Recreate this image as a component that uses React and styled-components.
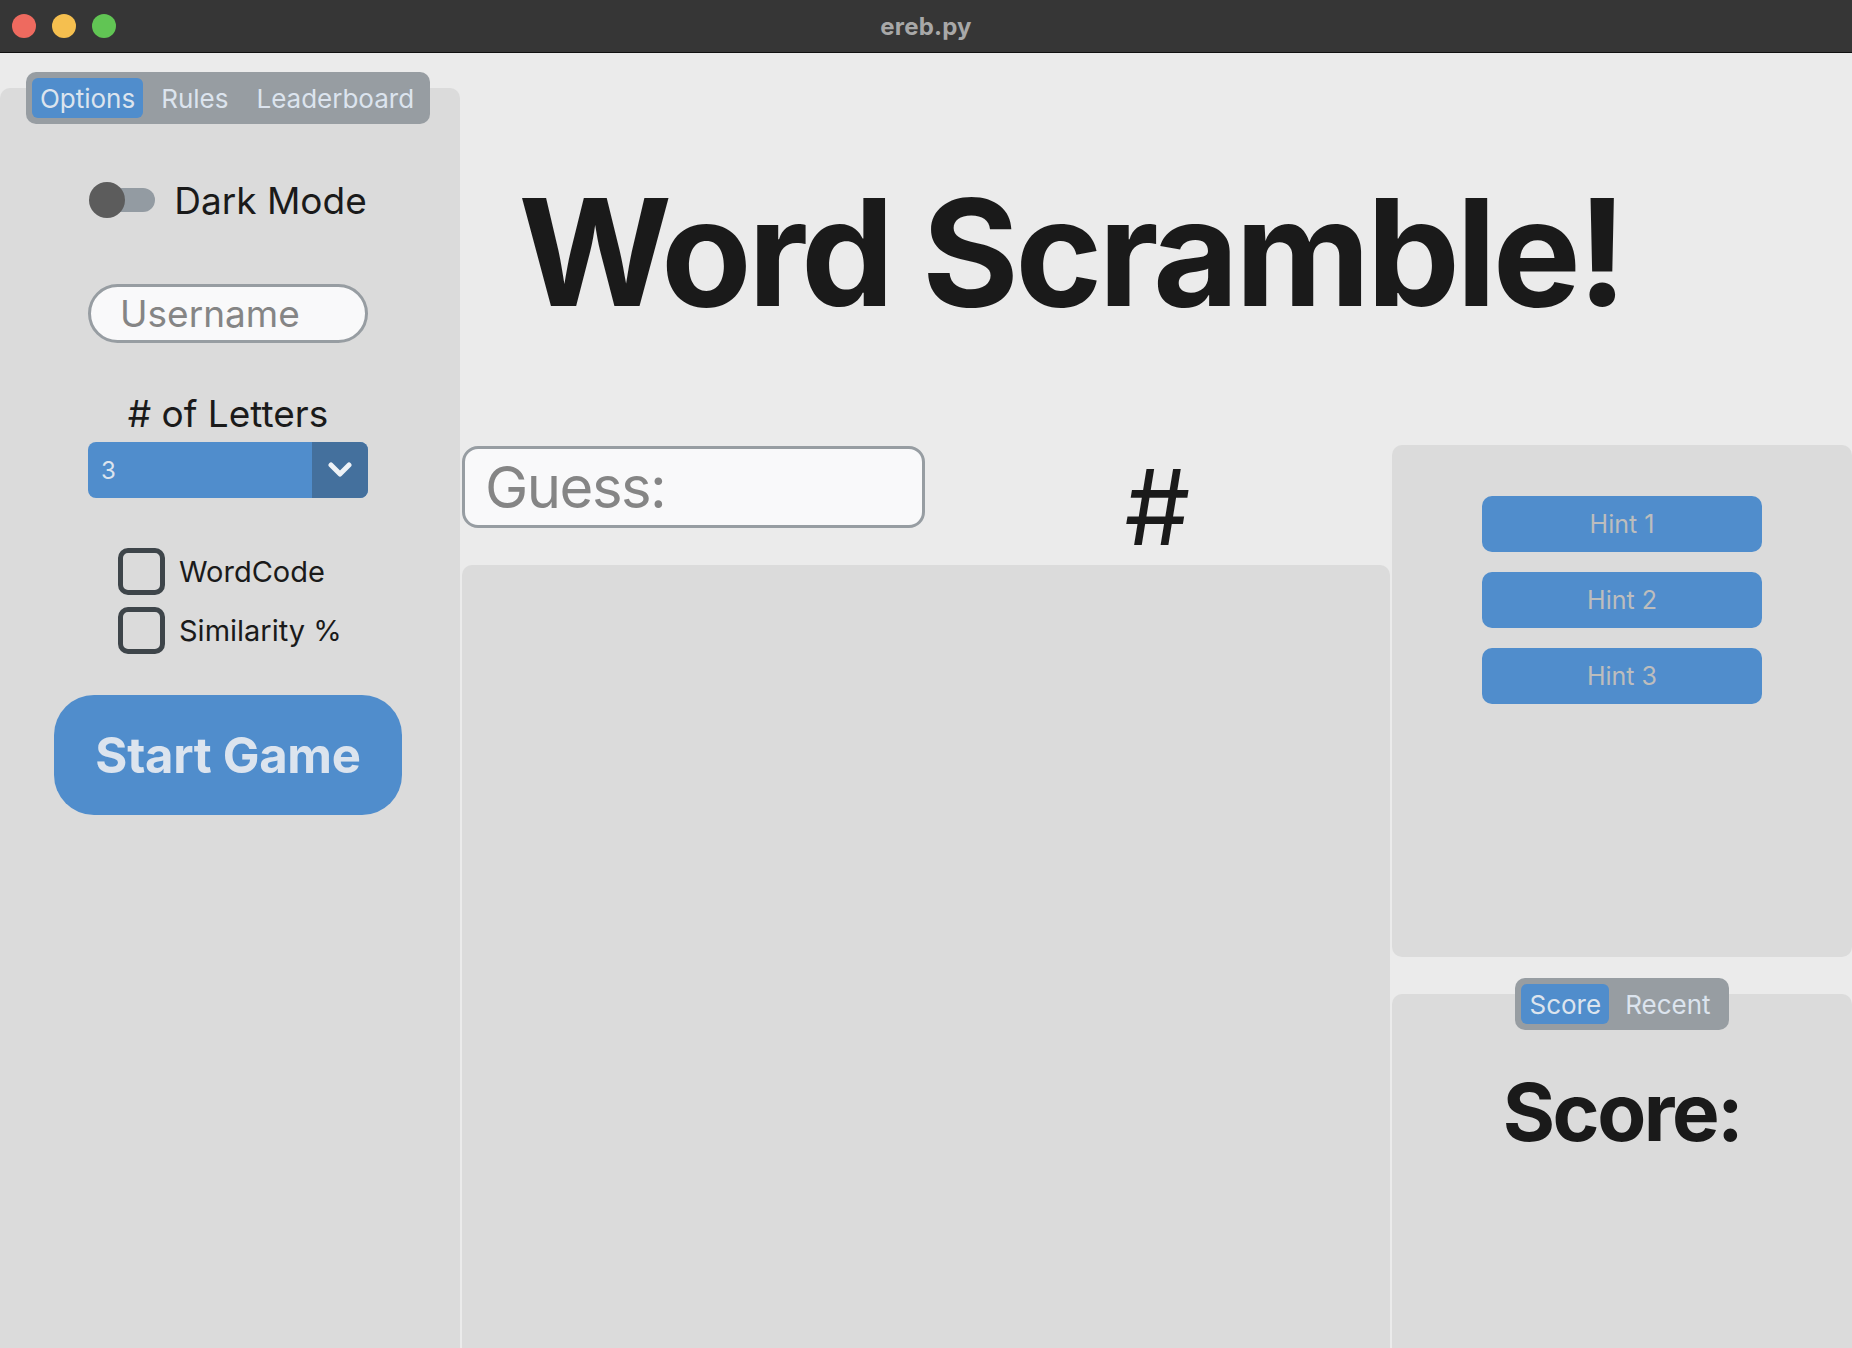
import React from 'react'
import styled, { createGlobalStyle } from 'styled-components'

const GlobalStyle = createGlobalStyle`
    html,
    body {
        margin: 0;
        padding: 0;
        height: 100%;
        overflow: hidden;
    }
    body {
        font-family: Inter, 'Noto Sans', sans-serif;
        background: #ebebeb;
        color: #1a1a1a;
    }
    #root {
        height: 100%;
    }
`

const Window = styled.div`
    display: flex;
    flex-direction: column;
    height: 100vh;
    background: #ebebeb;
`

const TitleBar = styled.header`
    flex: none;
    height: 52px;
    display: grid;
    grid-template-columns: 1fr auto 1fr;
    align-items: center;
    background: #363636;
    border-bottom: 1px solid #101010;
`

const Lights = styled.div`
    display: flex;
    gap: 16px;
    padding-left: 12px;
`

const Light = styled.span`
    width: 24px;
    height: 24px;
    border-radius: 50%;
    background: ${p => p.color};
`

const WindowTitle = styled.div`
    font-size: 24px;
    font-weight: 700;
    color: #a8a8a8;
    letter-spacing: 0.2px;
`

const Body = styled.div`
    flex: 1;
    min-height: 0;
    display: flex;
`

const SideColumn = styled.aside`
    width: 460px;
    flex: none;
    display: flex;
    flex-direction: column;
    align-items: center;
    padding-top: 19px;
`

const Segmented = styled.div`
    display: flex;
    padding: 6px;
    gap: 4px;
    background: #979da2;
    border-radius: 10px;
    position: relative;
    z-index: 1;
    margin-bottom: -36px;
    margin-right: ${p => p.shift || 0}px;
`

const Segment = styled.div`
    height: 40px;
    display: flex;
    align-items: center;
    padding: 0 ${p => p.pad || 8}px;
    border-radius: 6px;
    font-size: 26px;
    color: #dce4ee;
    background: ${p => (p.active ? '#508dcc' : 'transparent')};
`

const SidePanel = styled.div`
    align-self: stretch;
    flex: 1;
    background: #dbdbdb;
    border-radius: 10px 10px 0 0;
    padding-top: 94px;
    display: flex;
    flex-direction: column;
    align-items: center;
    padding-right: 4px;
`

const SwitchRow = styled.label`
    height: 36px;
    display: flex;
    align-items: center;
    gap: 19px;
    font-size: 37px;
    color: #1a1a1a;
`

const Switch = styled.span`
    position: relative;
    width: 66px;
    height: 36px;
    display: flex;
    align-items: center;

    &::before {
        content: '';
        margin-left: 15px;
        width: 51px;
        height: 24px;
        border-radius: 12px;
        background: #939ba2;
    }
    &::after {
        content: '';
        position: absolute;
        left: 0;
        top: 0;
        width: 36px;
        height: 36px;
        border-radius: 50%;
        background: #5c5c5c;
    }
`

const Entry = styled.div`
    box-sizing: border-box;
    width: ${p => p.w}px;
    height: ${p => p.h}px;
    margin-top: ${p => p.mt || 0}px;
    border: 3px solid #979da2;
    border-radius: ${p => p.r}px;
    background: #f9f9fa;
    display: flex;
    align-items: center;
    padding-left: ${p => p.pl}px;
    font-size: ${p => p.fs}px;
    letter-spacing: ${p => p.ls || 0}px;
    color: #858585;
    flex: none;
`

const FieldLabel = styled.div`
    margin-top: 47px;
    font-size: 37px;
    line-height: 48px;
`

const Dropdown = styled.div`
    margin-top: 4px;
    width: 280px;
    height: 56px;
    display: flex;
    border-radius: 8px;
    overflow: hidden;
    background: #508dcc;
    color: #dce4ee;
`

const DropValue = styled.div`
    flex: 1;
    display: flex;
    align-items: center;
    padding-left: 13px;
    font-size: 24px;
`

const DropArrow = styled.div`
    width: 56px;
    display: flex;
    align-items: center;
    justify-content: center;
    background: #44709d;
`

const Checks = styled.div`
    align-self: flex-start;
    margin: 50px 0 0 118px;
    display: flex;
    flex-direction: column;
    gap: 12px;
`

const CheckRow = styled.label`
    display: flex;
    align-items: center;
    gap: 14px;
    font-size: 29px;
    color: #1a1a1a;
`

const Box = styled.span`
    box-sizing: border-box;
    width: 47px;
    height: 47px;
    border: 5px solid #3e454a;
    border-radius: 10px;
`

const StartButton = styled.button`
    margin-top: 41px;
    width: 348px;
    height: 120px;
    border: none;
    border-radius: 40px;
    background: #508dcc;
    color: #dce4ee;
    font-family: inherit;
    font-size: 49px;
    font-weight: 700;
    letter-spacing: -0.3px;
`

const Main = styled.main`
    flex: 1;
    min-width: 0;
    margin-left: 2px;
    display: flex;
    flex-direction: column;
`

const TitleArea = styled.div`
    height: 392px;
    flex: none;
    display: flex;
    align-items: center;
    justify-content: center;
    padding-right: 172px;
`

const BigTitle = styled.h1`
    margin: 8px 0 0;
    font-size: 148px;
    font-weight: 700;
    letter-spacing: -3.7px;
    line-height: 1;
    color: #1a1a1a;
`

const Lower = styled.div`
    flex: 1;
    min-height: 0;
    display: flex;
    gap: 2px;
`

const CenterColumn = styled.section`
    width: 928px;
    flex: none;
    display: flex;
    flex-direction: column;
`

const GuessRow = styled.div`
    height: 120px;
    flex: none;
    display: flex;
    align-items: flex-start;
`

const HashMark = styled.div`
    flex: 1;
    text-align: center;
    font-size: 104px;
    line-height: 1;
    margin-top: 10px;
    color: #1a1a1a;
`

const Panel = styled.div`
    background: #dbdbdb;
    border-radius: ${p => p.radius || '10px'};
`

const GamePanel = styled(Panel)`
    flex: 1;
`

const RightColumn = styled.section`
    flex: 1;
    display: flex;
    flex-direction: column;
`

const HintPanel = styled(Panel)`
    height: 512px;
    flex: none;
    box-sizing: border-box;
    padding-top: 51px;
    display: flex;
    flex-direction: column;
    align-items: center;
    gap: 20px;
`

const HintButton = styled.button`
    width: 280px;
    height: 56px;
    border: none;
    border-radius: 10px;
    background: #508dcc;
    color: #bdbdbd;
    font-family: inherit;
    font-size: 25px;
`

const ScoreSection = styled.div`
    flex: 1;
    margin-top: 21px;
    display: flex;
    flex-direction: column;
    align-items: center;
`

const ScorePanel = styled(Panel)`
    align-self: stretch;
    flex: 1;
    padding-top: 69px;
    text-align: center;
`

const ScoreText = styled.div`
    font-size: 80px;
    font-weight: 700;
    letter-spacing: -2.5px;
    color: #1a1a1a;
`

const Chevron = () => (
    <svg width="24" height="16" viewBox="0 0 24 16">
        <polyline
            points="3,3 12,12 21,3"
            fill="none"
            stroke="#eef2f7"
            strokeWidth="5"
            strokeLinecap="round"
            strokeLinejoin="round"
        />
    </svg>
)

const App = () => (
    <>
        <GlobalStyle />
        <Window>
            <TitleBar>
                <Lights>
                    <Light color="#ee6a5f" />
                    <Light color="#f5bf4f" />
                    <Light color="#61c554" />
                </Lights>
                <WindowTitle>ereb.py</WindowTitle>
                <div />
            </TitleBar>
            <Body>
                <SideColumn>
                    <Segmented shift={4}>
                        <Segment active>Options</Segment>
                        <Segment pad={14}>Rules</Segment>
                        <Segment pad={10}>Leaderboard</Segment>
                    </Segmented>
                    <SidePanel>
                        <SwitchRow>
                            <Switch />
                            Dark Mode
                        </SwitchRow>
                        <Entry w={280} h={59} r={30} pl={29} fs={37} mt={66}>
                            Username
                        </Entry>
                        <FieldLabel># of Letters</FieldLabel>
                        <Dropdown>
                            <DropValue>3</DropValue>
                            <DropArrow>
                                <Chevron />
                            </DropArrow>
                        </Dropdown>
                        <Checks>
                            <CheckRow>
                                <Box />
                                WordCode
                            </CheckRow>
                            <CheckRow>
                                <Box />
                                Similarity %
                            </CheckRow>
                        </Checks>
                        <StartButton>Start Game</StartButton>
                    </SidePanel>
                </SideColumn>
                <Main>
                    <TitleArea>
                        <BigTitle>Word Scramble!</BigTitle>
                    </TitleArea>
                    <Lower>
                        <CenterColumn>
                            <GuessRow>
                                <Entry w={463} h={82} r={16} pl={20} fs={58} ls={-1.5} mt={1}>
                                    Guess:
                                </Entry>
                                <HashMark>#</HashMark>
                            </GuessRow>
                            <GamePanel radius="10px 10px 0 0" />
                        </CenterColumn>
                        <RightColumn>
                            <HintPanel>
                                <HintButton>Hint 1</HintButton>
                                <HintButton>Hint 2</HintButton>
                                <HintButton>Hint 3</HintButton>
                            </HintPanel>
                            <ScoreSection>
                                <Segmented>
                                    <Segment active>Score</Segment>
                                    <Segment pad={12}>Recent</Segment>
                                </Segmented>
                                <ScorePanel radius="10px 10px 0 0">
                                    <ScoreText>Score:</ScoreText>
                                </ScorePanel>
                            </ScoreSection>
                        </RightColumn>
                    </Lower>
                </Main>
            </Body>
        </Window>
    </>
)

export default App
